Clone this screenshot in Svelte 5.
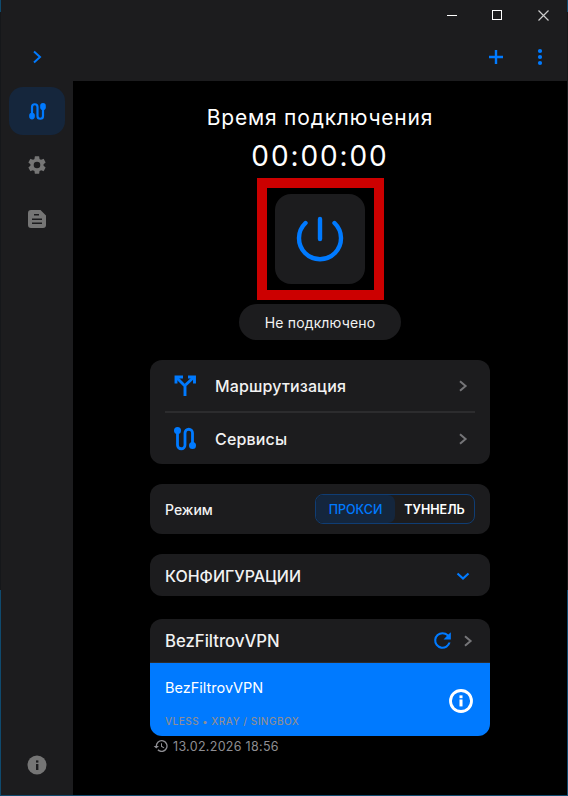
<script lang="ts">
  let mode = $state("proxy");
  const routes = [
    { label: "Маршрутизация", icon: "split" },
    { label: "Сервисы", icon: "route" },
  ];
</script>

{#snippet chevron()}
  <svg class="chev" width="14" height="14" viewBox="0 0 14 14"><path d="M4 2.2L9.6 7 4 11.8" fill="none" stroke="#757578" stroke-width="2"/></svg>
{/snippet}

<div class="app">
  <header class="topbar">
    <div class="controls">
      <svg width="10" height="10" viewBox="0 0 10 10"><path d="M0 5.5h10" stroke="#fff"/></svg>
      <svg width="10" height="10" viewBox="0 0 10 10"><rect x=".5" y=".5" width="9" height="9" fill="none" stroke="#fff"/></svg>
      <svg class="close" width="11" height="11" viewBox="0 0 11 11"><path d="M.5.5l10 10M10.5.5l-10 10" stroke="#ccc" stroke-width="1.2"/></svg>
    </div>
    <div class="actions">
      <svg width="14" height="14" viewBox="0 0 14 14"><path d="M4 1.5L10 7l-6 5.5" fill="none" stroke="#007aff" stroke-width="2"/></svg>
      <div class="actions-right">
        <svg width="16" height="16" viewBox="0 0 16 16"><path d="M8 1v14M1 8h14" stroke="#007aff" stroke-width="2.4"/></svg>
        <svg width="6" height="18" viewBox="0 0 6 18" fill="#007aff"><circle cx="3" cy="3" r="2.1"/><circle cx="3" cy="9" r="2.1"/><circle cx="3" cy="15" r="2.1"/></svg>
      </div>
    </div>
  </header>

  <div class="body">
    <nav class="sidebar">
      <div class="nav active">
        <svg width="17" height="17" viewBox="0 0 17 17" fill="none">
          <rect x=".2" y="9.8" width="5.6" height="6.6" rx="2.8" fill="#007aff"/>
          <rect x="11.2" y="0" width="5.6" height="7" rx="2.8" fill="#007aff"/>
          <path d="M3 12V4a2.75 2.75 0 0 1 5.5 0v9a2.75 2.75 0 0 0 5.5 0V5" stroke="#007aff" stroke-width="2.2"/>
        </svg>
      </div>
      <div class="nav">
        <svg width="22" height="22" viewBox="0 0 24 24" fill="#757575"><path d="M19.14 12.94c.04-.3.06-.61.06-.94s-.02-.64-.07-.94l2.03-1.58a.5.5 0 0 0 .12-.61l-1.92-3.32a.5.5 0 0 0-.59-.22l-2.39.96a7 7 0 0 0-1.62-.94l-.36-2.54a.48.48 0 0 0-.48-.41h-3.84a.48.48 0 0 0-.47.41l-.36 2.54c-.59.24-1.13.56-1.62.94l-2.39-.96a.48.48 0 0 0-.59.22L2.74 8.87a.47.47 0 0 0 .12.61l2.03 1.58c-.05.3-.09.63-.09.94s.02.64.07.94l-2.03 1.58a.5.5 0 0 0-.12.61l1.92 3.32c.12.22.37.29.59.22l2.39-.96c.5.38 1.03.7 1.62.94l.36 2.54c.05.24.24.41.48.41h3.84c.24 0 .44-.17.47-.41l.36-2.54a7 7 0 0 0 1.62-.94l2.39.96c.22.08.47 0 .59-.22l1.92-3.32a.46.46 0 0 0-.12-.61l-2.01-1.58zM12 15.6a3.6 3.6 0 1 1 0-7.2 3.6 3.6 0 0 1 0 7.2z"/></svg>
      </div>
      <div class="nav">
        <svg width="18" height="18" viewBox="0 0 18 18" fill="#757575" fill-rule="evenodd"><path d="M3 0h9.500L18 5.500V15a3 3 0 0 1-3 3H3a3 3 0 0 1-3-3V3a3 3 0 0 1 3-3zM6 4v1.600h5V4zM4 8.400V10h10V8.400zM4 12.400V14h10v-1.600z"/></svg>
      </div>
      <div class="nav info">
        <svg width="20" height="20" viewBox="0 0 20 20"><circle cx="10" cy="10" r="9.5" fill="#757575"/><rect x="9" y="9" width="2.4" height="6" fill="#1c1c1e"/><rect x="9" y="5.4" width="2.4" height="2.2" fill="#1c1c1e"/></svg>
      </div>
    </nav>

    <main class="main">
      <div class="title">Время подключения</div>
      <div class="timer">00:00:00</div>
      <div class="outline">
        <button class="power" aria-label="Подключить">
          <svg width="48" height="48" viewBox="0 0 48 48" fill="none" stroke="#007aff" stroke-width="4.4" stroke-linecap="round">
            <path d="M24 4v20"/>
            <path d="M9.500 8a21 21 0 1 0 29 0"/>
          </svg>
        </button>
      </div>
      <div class="status">Не подключено</div>

      <section class="card routes">
        {#each routes as r, i}
          {#if i > 0}<div class="divider"></div>{/if}
          <div class="route">
            <span class="route-icon">
              {#if r.icon === "split"}
                <svg width="24" height="24" viewBox="0 0 24 24" fill="none" stroke="#007aff" stroke-width="2.900">
                  <path d="M12 22V12L3.500 3.500"/>
                  <path d="M12.500 11L20.500 3.500"/>
                  <path d="M3 9.500V3h7"/>
                  <path d="M15 3h6.500v6.500"/>
                </svg>
              {:else}
                <svg width="24" height="24" viewBox="0 0 24 24" fill="none">
                  <circle cx="4.500" cy="3.500" r="3.500" fill="#007aff"/>
                  <circle cx="19.500" cy="18.500" r="3.500" fill="#007aff"/>
                  <path d="M4.500 3.500V18a3.750 3.750 0 0 0 7.500 0V6a3.750 3.750 0 0 1 7.500 0v12.500" stroke="#007aff" stroke-width="2.800"/>
                </svg>
              {/if}
            </span>
            <span class="route-label">{r.label}</span>
            {@render chevron()}
          </div>
        {/each}
      </section>

      <section class="card mode">
        <span>Режим</span>
        <div class="segment">
          <button class:on={mode === "proxy"} onclick={() => (mode = "proxy")}>ПРОКСИ</button>
          <button class:on={mode === "tunnel"} onclick={() => (mode = "tunnel")}>ТУННЕЛЬ</button>
        </div>
      </section>

      <section class="card configs">
        <span>КОНФИГУРАЦИИ</span>
        <svg width="14" height="14" viewBox="0 0 14 14"><path d="M1.500 4.500L7 9.500l5.500-5" fill="none" stroke="#007aff" stroke-width="2.200"/></svg>
      </section>

      <section class="group">
        <div class="group-head">
          <span class="group-name">BezFiltrovVPN</span>
          <svg width="25" height="25" viewBox="0 0 24 24"><path d="M17.650 6.350A7.960 7.960 0 0 0 12 4a8 8 0 1 0 7.730 10h-2.080A6 6 0 1 1 12 6c1.660 0 3.140.690 4.220 1.780L13 11h7V4l-2.350 2.350z" fill="#007aff"/></svg>
          {@render chevron()}
        </div>
        <div class="profile">
          <div class="profile-text">
            <div class="profile-name">BezFiltrovVPN</div>
            <div class="profile-meta">VLESS • XRAY / SINGBOX</div>
          </div>
          <svg class="profile-info" width="26" height="26" viewBox="0 0 24 24" fill="#fff"><path d="M12 1a11 11 0 1 0 0 22 11 11 0 0 0 0-22zm0 19.400a8.400 8.400 0 1 1 0-16.800 8.400 8.400 0 0 1 0 16.800z"/><rect x="10.600" y="10.600" width="2.800" height="6.400"/><rect x="10.600" y="6.800" width="2.800" height="2.600"/></svg>
        </div>
      </section>
      <div class="stamp">
        <svg width="16" height="16" viewBox="0 0 24 24" fill="#8e8e93"><path d="M13 3a9 9 0 0 0-9 9H1l3.900 3.900L9 12H6a7 7 0 1 1 2.050 4.950l-1.420 1.420A9 9 0 1 0 13 3zm-1 5v5l4.250 2.520.770-1.280-3.520-2.090V8H12z"/></svg>
        13.02.2026 18:56
      </div>
    </main>
  </div>
</div>

<style>
  :global(body) { margin: 0; background: #000; }
  .app {
    width: 568px; height: 796px; box-sizing: border-box; padding: 0 1px 1px;
    display: flex; flex-direction: column; overflow: hidden;
    background: linear-gradient(#0f4a6e 12px, #15171a 12px, #15171a 590px, #0f4a6e 590px);
    color: #fff; font-family: Inter, "Noto Sans", sans-serif;
  }
  .topbar { height: 81px; flex: none; display: flex; flex-direction: column; background: #1c1c1e; }
  .controls { height: 30px; display: flex; justify-content: flex-end; align-items: center; gap: 35px; padding-right: 18px; }
  .close { margin-left: 1px; }
  .actions { flex: 1; display: flex; justify-content: space-between; align-items: center; padding: 3px 24px 0 29px; }
  .actions-right { display: flex; align-items: center; gap: 33px; }
  .body { flex: 1; display: flex; min-height: 0; background: #1c1c1e; }
  .sidebar { width: 72px; flex: none; display: flex; flex-direction: column; align-items: center; padding-top: 6px; gap: 6px; }
  .nav { width: 56px; height: 48px; display: flex; align-items: center; justify-content: center; border-radius: 14px; }
  .nav.active { background: #15263c; }
  .nav.info { margin-top: auto; margin-bottom: 6px; }
  .main { flex: 1; background: #000; display: flex; flex-direction: column; align-items: center; padding-top: 25px; }
  .title { font-size: 21px; line-height: 24px; letter-spacing: .8px; }
  .timer { font-size: 28px; line-height: 34px; letter-spacing: 1.9px; margin-top: 9px; margin-bottom: 5px; }
  .outline { border: 10px solid #cc0000; width: 127px; height: 122px; box-sizing: border-box; display: flex; justify-content: center; align-items: center; }
  .power { width: 90px; height: 90px; border: 0; border-radius: 16px; background: #1c1c1e; padding: 0; display: flex; align-items: center; justify-content: center; }
  .status { margin-top: 4px; width: 162px; height: 36px; border-radius: 18px; background: #1c1c1e; display: flex; align-items: center; justify-content: center; font-size: 14px; letter-spacing: .15px; color: #f2f2f2; }
  .card { width: 340px; box-sizing: border-box; background: #1c1c1e; border-radius: 12px; }
  .routes { margin-top: 20px; height: 104px; padding: 0 15px; display: flex; flex-direction: column; }
  .route { flex: 1; display: flex; align-items: center; font-size: 16px; letter-spacing: .15px; font-weight: 500; color: #f2f2f2; }
  .route .chev { margin-right: 5px; }
  .route-icon { width: 50px; display: flex; padding-left: 8px; box-sizing: border-box; }
  .route-label { flex: 1; }
  .divider { height: 2px; background: #2c2c2e; }
  .chev { display: block; }
  .mode { margin-top: 20px; height: 50px; padding: 0 15px; display: flex; align-items: center; justify-content: space-between; font-size: 14px; font-weight: 500; color: #f2f2f2; }
  .segment { display: flex; width: 160px; height: 30px; box-sizing: border-box; border: 1px solid #0f3d74; border-radius: 8px; overflow: hidden; }
  .segment button { flex: 1; border: 0; background: none; color: #fff; font: 600 12.5px Inter, sans-serif; padding: 1px 0 0; }
  .segment button.on { background: #14263d; color: #007aff; font-weight: 500; border-radius: 7px; flex: 0 0 79px; }
  .configs { margin-top: 20px; height: 42px; padding: 1px 20px 0 15px; display: flex; align-items: center; justify-content: space-between; font-size: 16px; font-weight: 500; color: #f2f2f2; }
  .group { margin-top: 23px; width: 340px; border-radius: 12px; overflow: hidden; }
  .group-head { height: 44px; box-sizing: border-box; background: #1c1c1e; display: flex; align-items: center; gap: 6px; padding: 0 15px; border-bottom: 1px solid #2c2c2e; }
  .group-name { flex: 1; font-size: 16.7px; font-weight: 500; color: #f2f2f2; }
  .profile { height: 73px; background: #007aff; display: flex; align-items: center; justify-content: space-between; padding: 0 16px 0 15px; }
  .profile-text { display: flex; flex-direction: column; height: 100%; justify-content: space-between; padding: 16px 0 9px; box-sizing: border-box; }
  .profile-name { font-size: 14.5px; line-height: 18px; }
  .profile-meta { font-size: 10px; line-height: 12px; letter-spacing: .5px; color: #8e8e93; font-weight: 500; }
  .profile-info { margin-top: 2px; }
  .stamp { width: 340px; box-sizing: border-box; padding-left: 3px; margin-top: 2px; display: flex; align-items: center; gap: 4px; font-size: 12.5px; letter-spacing: .3px; color: #8e8e93; }
</style>
